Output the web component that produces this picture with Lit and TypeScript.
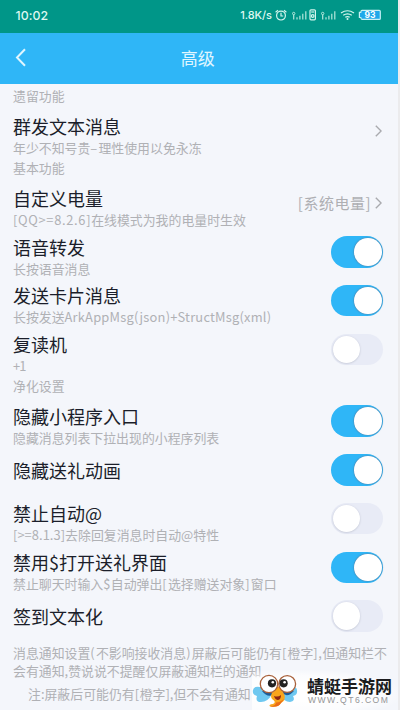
import { LitElement, html, css, svg, nothing } from "lit";
import { customElement, property } from "lit/decorators.js";
import { classMap } from "lit/directives/class-map.js";

type Run = { t: string; s?: number };

const runs = (parts: Run[]) =>
  parts.map((p) => (p.s === undefined ? html`<span>${p.t}</span>` : html`<span style="letter-spacing:${p.s}px">${p.t}</span>`));

@customElement("toggle-switch")
class ToggleSwitch extends LitElement {
  @property({ type: Boolean }) on = false;
  static styles = css`
    :host { display: block; }
    .track { width: 52px; height: 31.5px; border-radius: 16px; box-sizing: border-box; padding: 2px 1.5px; display: flex; background: #e8ebf6; }
    .track.on { background: #2fb6f7; justify-content: flex-end; }
    .knob { width: 27.5px; height: 27.5px; border-radius: 50%; background: #fff; box-shadow: 0 0.5px 2px rgba(90, 95, 120, 0.3); }
    .on .knob { box-shadow: 0 0 1.5px 0.3px rgba(90, 110, 140, 0.8); }
  `;
  render() {
    return html`<div class=${classMap({ track: true, on: this.on })}><div class="knob"></div></div>`;
  }
}

@customElement("setting-row")
class SettingRow extends LitElement {
  @property({ attribute: false }) heading: Run[] = [];
  @property({ attribute: false }) detail: Run[] = [];
  @property() kind = "link";
  @property() value = "";
  static styles = css`
    :host { display: flex; height: 48.75px; align-items: center; justify-content: space-between; padding: 0 14.5px 0 13px; white-space: nowrap; }
    .text { display: flex; flex-direction: column; }
    .two { padding-top: 10.5px; }
    .heading { font-size: 18px; line-height: 22px; color: #1b1e2a; }
    .detail { font-size: 12.9px; line-height: 21px; color: #b0b1b5; }
    .end { display: flex; align-items: center; gap: 4px; font-size: 15px; line-height: 22px; color: #aeafb3; }
    .value { letter-spacing: 0.5px; }
    .arrow { display: block; margin-right: 1px; }
  `;
  render() {
    const two = this.detail.length > 0;
    return html`
      <div class=${classMap({ text: true, two })}>
        <div class="heading">${runs(this.heading)}</div>
        ${two ? html`<div class="detail">${runs(this.detail)}</div>` : nothing}
      </div>
      ${this.kind === "link"
        ? html`<div class="end">
            ${this.value ? html`<span class="value">${this.value}</span>` : nothing}
            <svg class="arrow" width="7" height="12" viewBox="0 0 7 12">
              <path d="M0.8 0.8 6.1 6 0.8 11.2" fill="none" stroke="#a9aaae" stroke-width="1.4" />
            </svg>
          </div>`
        : html`<toggle-switch ?on=${this.kind === "on"}></toggle-switch>`}
    `;
  }
}

const signal = svg`
  <circle cx="1.7" cy="2.2" r="1.2" fill="none" stroke="#b4e8dc" stroke-width="1" />
  <path d="M1.7 3.4V8.3M5 5.9V8.3M7.9 4.5V8.3M10.8 2.5V8.3M13.8 0V8.3" stroke="#b4e8dc" stroke-width="1.2" />
`;

@customElement("status-bar")
class StatusBar extends LitElement {
  static styles = css`
    :host { display: flex; height: 33px; background: #009688; color: #dff8f1; font-family: "Inter", sans-serif; font-weight: 500; align-items: center; padding: 0 15.5px 3px 15.5px; box-sizing: border-box; }
    .clock { font-size: 12.3px; letter-spacing: 0.1px; flex: 1; }
    .rate { font-size: 11px; letter-spacing: -0.05px; margin-right: 1px; }
    svg { display: block; flex: none; }
  `;
  render() {
    return html`
      <div class="clock">10:02</div>
      <div class="rate">1.8K/s</div>
      <svg width="109" height="14" viewBox="273 8 109 14">
        <g fill="none" stroke="#d4f5ed" stroke-width="1.2">
          <circle cx="281" cy="15.6" r="4.4" />
          <path d="M281 12.8V16H283.2M275.6 12.2 278 10.3M284 10.3 286.4 12.2" />
          <rect x="310" y="9.8" width="5.4" height="10" rx="1" />
          <circle cx="312.7" cy="16" r="1.3" />
          <path d="M311.2 12H314.2" />
          <path d="M341 13.1Q347.5 8.4 354 13.1M343.2 15.3Q347.5 12.3 351.8 15.3M345.3 17.3Q347.5 15.9 349.7 17.3" />
        </g>
        <circle cx="347.5" cy="19" r="1" fill="#d4f5ed" />
        <g transform="translate(292 11.3)">${signal}</g>
        <g transform="translate(321 11.3)">${signal}</g>
        <path d="M362 10.4H379.3Q380.3 10.4 380.3 11.4V18.4Q380.3 19.4 379.3 19.4H362Q361 19.4 360.8 17.5H359.4V12.3H360.8Q361 10.4 362 10.4Z" fill="#1fa8ea" stroke="#c5f0f5" stroke-width="1.2" />
        <text x="370" y="18" text-anchor="middle" font-size="8.5" font-weight="700" font-family="Inter, sans-serif" fill="#fff">93</text>
      </svg>
    `;
  }
}

@customElement("site-mark")
class SiteMark extends LitElement {
  static styles = css`
    :host { display: flex; align-items: center; gap: 9px; width: 146px; height: 40px; background: radial-gradient(ellipse at 30% 60%, #fff 20%, rgba(255, 255, 255, 0.7) 55%, rgba(255, 255, 255, 0) 75%); }
    .name { font-size: 17px; line-height: 20px; font-weight: 700; color: #1c1c1e; white-space: nowrap; }
    .site { font-family: "Liberation Sans", sans-serif; font-size: 8.6px; line-height: 9px; letter-spacing: 1.45px; color: #949496; white-space: nowrap; padding-left: 1px; }
    svg { display: block; flex: none; }
  `;
  render() {
    return html`
      <svg width="46" height="38" viewBox="252 671 46 38">
        <path d="M267 689Q254 684 253 690Q252 695 257 696Q255 702 261 702Q268 702 272 694Z" fill="#6fc8f0" />
        <path d="M284 689Q296 684 297 690Q298 695 293 696Q296 701 290 702Q284 702 279 694Z" fill="#6fc8f0" />
        <path d="M262 691Q269 700 276 692ZM281 692Q287 699 294 691Z" fill="#1d5b96" />
        <path d="M275 688Q278 685 281 688L284.5 695Q286 700 281 703Q278 708 270 706.5Q268 704.5 273 704Q277 702 272 699Q269 696 275 688Z" fill="#f9a51c" />
        <path d="M270 706.5Q278 708 281 703L284 699Q279 703 276 702.5Q276 706 270 706.5Z" fill="#ea6a17" />
        <circle cx="269" cy="684" r="8.7" fill="#fff" stroke="#a8603a" stroke-width="1.3" />
        <circle cx="287.2" cy="684" r="8.4" fill="#fff" stroke="#a8603a" stroke-width="1.3" />
        <circle cx="272" cy="683.3" r="4.1" fill="#222" />
        <circle cx="283.6" cy="683.3" r="4.1" fill="#222" />
        <circle cx="272.8" cy="682.2" r="1.3" fill="#fff" />
        <circle cx="284.6" cy="682.2" r="1.3" fill="#fff" />
        <path d="M274 696Q278 697.5 281 695Q281 700 277.5 700Q275 699.5 274 696Z" fill="#8e2612" />
      </svg>
      <div>
        <div class="name">蜻蜓手游网</div>
        <div class="site">WWW.QT6.COM</div>
      </div>
    `;
  }
}

@customElement("app-root")
class AppRoot extends LitElement {
  static styles = css`
    :host { display: block; position: relative; width: 400px; height: 710px; overflow: hidden; background: #ebebed; font-family: "Noto Sans CJK SC", sans-serif; }
    .screen { width: 397.5px; height: 710px; background: #f4f6fb; overflow: hidden; }
    .bar { height: 51px; background: #2fb6f7; display: flex; align-items: center; justify-content: center; position: relative; color: #e0f6ff; font-size: 17px; line-height: 24px; padding: 0 2px 1px 0; box-sizing: border-box; }
    .back { position: absolute; left: 15px; top: 15px; }
    .section { height: 23px; line-height: 24px; padding-left: 13px; font-size: 12.9px; color: #b0b1b5; }
    .note { font-size: 12.9px; line-height: 17.5px; color: #b0b1b5; padding: 3.5px 0 0 13px; white-space: nowrap; }
    .note.inset { padding: 6px 0 0 28px; }
    .mark { position: absolute; left: 252px; top: 670px; }
  `;
  render() {
    return html`
      <div class="screen">
        <status-bar></status-bar>
        <div class="bar">
          <svg class="back" width="12" height="19" viewBox="0 0 12 19">
            <path d="M10 1.2 2 9.5 10 17.8" fill="none" stroke="#e0f6ff" stroke-width="2" />
          </svg>
          高级
        </div>
        <div class="section">遗留功能</div>
        <setting-row .heading=${[{ t: "群发文本消息" }]} .detail=${[{ t: "年少不知号贵" }, { t: "–", s: 1.2 }, { t: "理性使用以免永冻" }]}></setting-row>
        <div class="section">基本功能</div>
        <setting-row .heading=${[{ t: "自定义电量" }]} .detail=${[{ t: "[QQ>=8.2.6]", s: 0.67 }, { t: "在线模式为我的电量时生效" }]} value="[系统电量]"></setting-row>
        <setting-row kind="on" .heading=${[{ t: "语音转发" }]} .detail=${[{ t: "长按语音消息" }]}></setting-row>
        <setting-row kind="on" .heading=${[{ t: "发送卡片消息" }]} .detail=${[{ t: "长按发送" }, { t: "ArkAppMsg(json)+StructMsg(xml)", s: 0.2 }]}></setting-row>
        <setting-row kind="off" .heading=${[{ t: "复读机" }]} .detail=${[{ t: "+1", s: -0.8 }]}></setting-row>
        <div class="section">净化设置</div>
        <setting-row kind="on" .heading=${[{ t: "隐藏小程序入口" }]} .detail=${[{ t: "隐藏消息列表下拉出现的小程序列表" }]}></setting-row>
        <setting-row kind="on" .heading=${[{ t: "隐藏送礼动画" }]}></setting-row>
        <setting-row kind="off" .heading=${[{ t: "禁止自动" }, { t: "@" }]} .detail=${[{ t: "[>=8.1.3]", s: 0.05 }, { t: "去除回复消息时自动@特性" }]}></setting-row>
        <setting-row
          kind="on"
          .heading=${[{ t: "禁用$打开送礼界面" }]}
          .detail=${[{ t: "禁止聊天时输入" }, { t: "$", s: 0.4 }, { t: "自动弹出" }, { t: "[", s: 1.2 }, { t: "选择赠送对象" }, { t: "]", s: 1.2 }, { t: "窗口" }]}
        ></setting-row>
        <setting-row kind="off" .heading=${[{ t: "签到文本化" }]}></setting-row>
        <div class="note">
          <div>${runs([{ t: "消息通知设置" }, { t: "(", s: 1.2 }, { t: "不影响接收消息" }, { t: ")", s: 1.2 }, { t: "屏蔽后可能仍有" }, { t: "[", s: 1.2 }, { t: "橙字" }, { t: "],", s: 0.6 }, { t: "但通知栏不" }])}</div>
          <div>会有通知,赞说说不提醒仅屏蔽通知栏的通知</div>
        </div>
        <div class="note inset">${runs([{ t: "注:屏蔽后可能仍有" }, { t: "[", s: 0.6 }, { t: "橙字],但不会有通知" }])}</div>
      </div>
      <site-mark class="mark"></site-mark>
    `;
  }
}
